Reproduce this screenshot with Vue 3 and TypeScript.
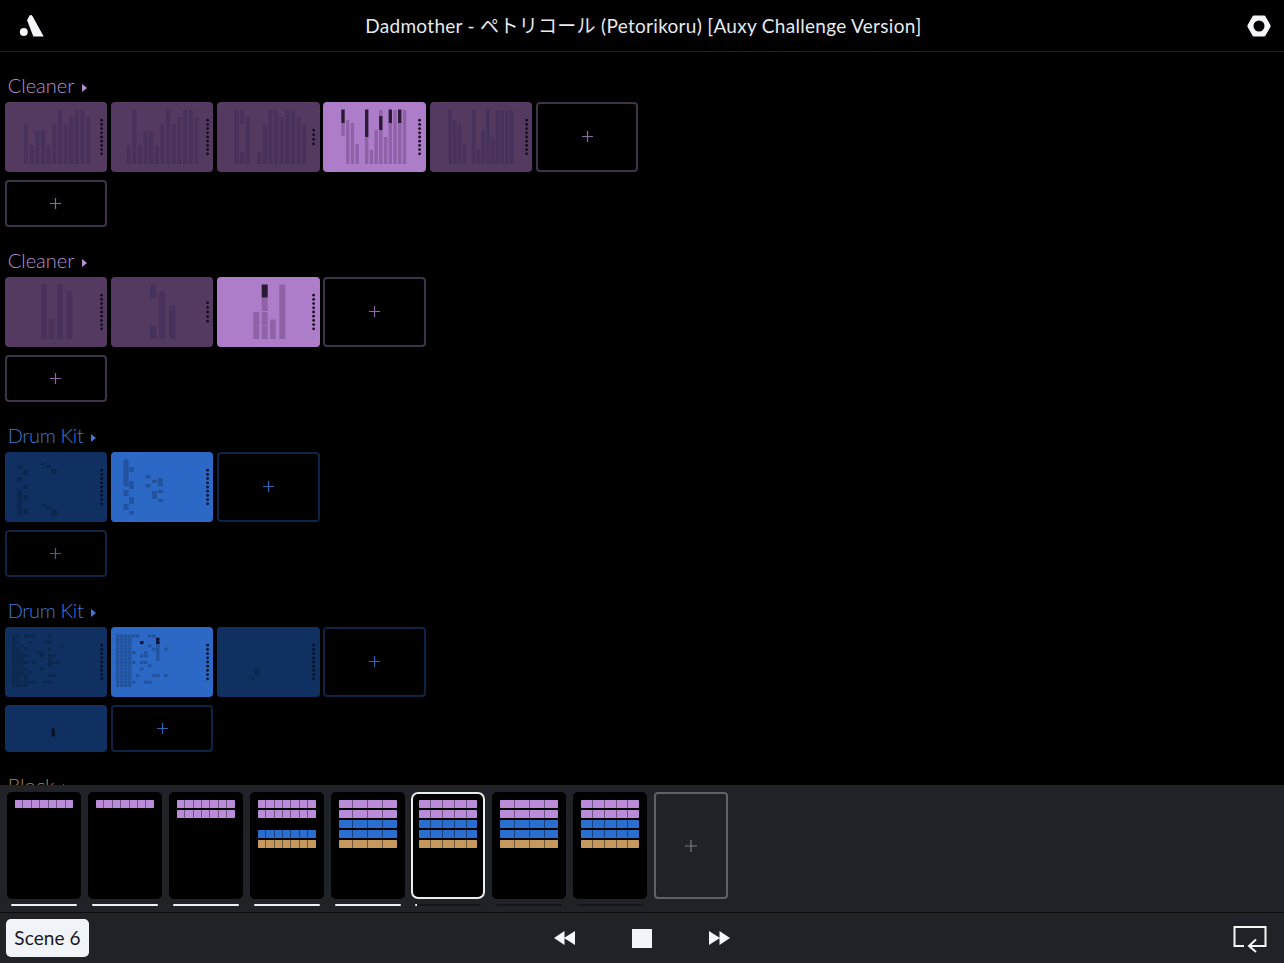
<script setup lang="ts">
type Tone = 'dim' | 'bar' | 'note'
interface Block { x: number; y: number; w: number; h: number; tone: Tone }
interface Clip { active?: boolean; dots: number; blocks: Block[] }
interface Section { name: string; color: 'purple' | 'blue' | 'tan'; clips: Clip[]; extra: Clip[]; addInRow: boolean }

const BOTTOM = 62

function cols(start: number, pitch: number, width: number, tops: (number | null)[]): Block[] {
  const out: Block[] = []
  tops.forEach((t, i) => {
    if (t !== null) out.push({ x: start + i * pitch, y: t, w: width, h: BOTTOM - t, tone: 'bar' })
  })
  return out
}
function rects(list: number[][], tone: Tone = 'bar'): Block[] {
  return list.map(([x, y, w, h]) => ({ x, y, w, h, tone }))
}
function bitmap(x0: number, y0: number, cw: number, ch: number, rows: string[]): Block[] {
  const out: Block[] = []
  rows.forEach((row, r) => {
    for (let c = 0; c < row.length; c++) {
      if (row[c] === '.') continue
      out.push({ x: x0 + c * cw, y: y0 + r * ch, w: cw - 0.5, h: ch - 0.3, tone: row[c] === 'X' ? 'note' : 'bar' })
    }
  })
  return out
}

const c5Tops = [8, 18, 21, 42, null, 8, 48, 28, 8, 35, 8, 8, 8, 8]
const sections: Section[] = [
  {
    name: 'Cleaner', color: 'purple', addInRow: true,
    clips: [
      { dots: 9, blocks: cols(19, 5.65, 4, [22, 43, 29, 29, 43, 22, 8, 22, 15, 8, 8, 15]) },
      { dots: 9, blocks: cols(15.6, 5.65, 4, [43, 8, 43, 29, 29, 43, 22, 8, 22, 15, 8, 8, 15]) },
      {
        dots: 4,
        blocks: [
          ...cols(17.5, 5.65, 4, [8, null, 15, null, 50, 22, 8, 8, 15, 8, 8, 15, 22]),
          ...rects([[23.2, 8, 4, 14], [23.2, 50, 4, 12], [17.5, 8, 4, 54]]),
        ],
      },
      {
        active: true, dots: 9,
        blocks: [
          ...rects([[18.3, 21, 3.4, 13]]),
          ...cols(18.3, 4.73, 3.4, [null, 18, 21, 42, null, 35, 48, 28, 28, 35, 21, 8, 21, 8]),
          ...rects([[56.1, 8, 3.4, 6]]),
          ...rects([[18.3, 7.5, 3.4, 13.5], [42, 7.5, 3.4, 27.5], [56.1, 14, 3.4, 14], [65.6, 7.5, 3.4, 13.5], [75, 7.5, 3.4, 13.5]], 'note'),
        ],
      },
      {
        dots: 9,
        blocks: [...cols(18.3, 4.73, 3.6, c5Tops), ...rects([[18.3, 8, 3.6, 26]])],
      },
    ],
    extra: [],
  },
  {
    name: 'Cleaner', color: 'purple', addInRow: true,
    clips: [
      { dots: 9, blocks: rects([[36.3, 7.5, 5.5, 54.5], [43.8, 42, 5.5, 20], [52.3, 7.5, 5.5, 54.5], [61.7, 14.5, 5.5, 47.5]]) },
      { dots: 5, blocks: rects([[39, 7.5, 6.2, 13], [39, 49, 6.2, 13], [48, 14.5, 6, 47.5], [58, 28.5, 6.5, 33.5]]) },
      {
        active: true, dots: 9,
        blocks: [
          ...rects([[36.3, 35, 6, 27], [44.7, 20.5, 6, 13.5], [44.7, 35, 6, 13.5], [44.7, 49, 6, 13], [53, 42.5, 5.7, 19.5], [62.3, 7.5, 6, 54.5]]),
          ...rects([[44.7, 7.5, 6, 13]], 'note'),
        ],
      },
    ],
    extra: [],
  },
  {
    name: 'Drum Kit', color: 'blue', addInRow: true,
    clips: [
      {
        dots: 9,
        blocks: rects([
          [12, 13, 5, 4], [12, 25, 5, 5], [12, 37, 5, 27], [18, 18, 5, 5], [18, 33, 5, 4], [18, 43, 5, 5], [18, 57, 5, 5],
          [36, 11, 5, 2], [41, 13, 5, 3], [46, 17, 6, 5], [36, 52, 5, 2], [41, 54, 5, 3], [46, 57, 6, 7],
        ]),
      },
      {
        active: true, dots: 9,
        blocks: rects([
          [12.5, 7.5, 5, 27], [12.5, 38, 5, 6], [12.5, 52, 5, 6], [18, 15, 5, 5], [18, 29, 5, 8], [18, 45, 5, 7], [18, 59, 5, 3.5],
          [34.5, 23, 5, 3.5], [34.5, 32, 5, 3.5], [41, 28, 5, 3], [41, 39, 5, 8], [47, 26, 5, 8], [47, 38, 5, 3], [47, 47, 5, 3],
        ]),
      },
    ],
    extra: [],
  },
  {
    name: 'Drum Kit', color: 'blue', addInRow: true,
    clips: [
      {
        dots: 9,
        blocks: bitmap(7, 7.5, 4, 3.3, [
          '##.###...#...', '#............', '##..#...##...', '#.#.........#', '##.#.....#...', '###...##.....',
          '####...#.##..', '###......#...', '####.#...###.', '###......#...', '####...#.....', '###.#........',
          '####.....##..', '##.#.........', '######..##...', '####.........',
        ]),
      },
      {
        active: true, dots: 9,
        blocks: bitmap(5, 7.5, 4, 3.3, [
          '######..##...', '####......X..', '####..X...X..', '####....#.#..', '####.....##.#', '#####..#..#..',
          '####..##..#..', '####......#..', '#####.##.....', '####....#....', '####..#......', '####.........',
          '####.#...##.#', '####.........', '#####..##....', '####.........',
        ]),
      },
      { dots: 9, blocks: rects([[37.5, 41, 5, 8], [29, 49, 5, 1.5], [34, 50, 4, 3]]) },
    ],
    extra: [{ dots: 0, blocks: rects([[46.5, 23.5, 3.5, 8]], 'note') }],
  },
  { name: 'Block', color: 'tan', addInRow: false, clips: [], extra: [] },
]

const clipHeight = (short: boolean): string => (short ? '0 0 102.5 46.5' : '0 0 102.5 70')
function dotsFor(n: number): number[] {
  const pitch = n >= 9 ? 4.2 : 4.6
  const start = 35 - ((n - 1) * pitch) / 2
  return Array.from({ length: n }, (_, i) => start + i * pitch)
}

type Row = 'p' | 'b' | 't' | ''
interface Scene { rows: Row[]; cells: number; line: 'on' | 'start' | 'off'; selected?: boolean }
const full: Row[] = ['p', 'p', 'b', 'b', 't']
const scenes: Scene[] = [
  { rows: ['p'], cells: 7, line: 'on' },
  { rows: ['p'], cells: 7, line: 'on' },
  { rows: ['p', 'p'], cells: 7, line: 'on' },
  { rows: ['p', 'p', '', 'b', 't'], cells: 7, line: 'on' },
  { rows: full, cells: 4, line: 'on' },
  { rows: full, cells: 5, line: 'start', selected: true },
  { rows: full, cells: 4, line: 'off' },
  { rows: full, cells: 5, line: 'off' },
]
</script>

<template>
  <div class="app">
    <header class="top">
      <svg class="logo" width="25" height="24" viewBox="0 0 26 24" aria-label="Auxy">
        <circle cx="5" cy="18.2" r="4.1" fill="#f4f7fa" />
        <path d="M11 1.2 Q12.6 -0.4 14 1.5 L25.4 22.4 Q25.6 23 24.8 23 L15.6 23 Q15 23 14.7 22.4 L8.4 6 Z" fill="#f4f7fa" />
      </svg>
      <h1 class="title">Dadmother - ペトリコール (Petorikoru) [Auxy Challenge Version]</h1>
      <svg class="nut" width="24" height="22" viewBox="0 0 24 22" aria-label="Settings">
        <path fill-rule="evenodd" fill="#f4f7fa" d="M6.8 0.6 H17.2 Q18 0.6 18.4 1.3 L23.4 10 Q23.9 11 23.4 12 L18.4 20.7 Q18 21.4 17.2 21.4 H6.8 Q6 21.4 5.6 20.7 L0.6 12 Q0.1 11 0.6 10 L5.6 1.3 Q6 0.6 6.8 0.6 Z M12 5.5 A5.5 5.5 0 1 0 12 16.5 A5.5 5.5 0 1 0 12 5.5 Z" />
      </svg>
    </header>

    <main class="tracks">
      <section v-for="(s, si) in sections" :key="si" class="track" :class="s.color">
        <div class="label">
          <span>{{ s.name }}</span>
          <i class="caret"></i>
        </div>
        <div class="row">
          <div v-for="(c, ci) in s.clips" :key="ci" class="clip" :class="{ active: c.active }">
            <svg :viewBox="clipHeight(false)" width="102.5" height="70">
              <rect v-for="(b, bi) in c.blocks" :key="bi" :x="b.x" :y="b.y" :width="b.w" :height="b.h" :class="b.tone" />
              <circle v-for="d in dotsFor(c.dots)" :key="d" cx="96.6" :cy="d" r="1.4" class="dot" />
            </svg>
          </div>
          <button v-if="s.addInRow" class="add">
            <svg width="11" height="11" viewBox="0 0 11 11"><path d="M5.5 0V11M0 5.5H11" /></svg>
          </button>
        </div>
        <div class="row short">
          <div v-for="(c, ci) in s.extra" :key="ci" class="clip short">
            <svg :viewBox="clipHeight(true)" width="102.5" height="46.5">
              <rect v-for="(b, bi) in c.blocks" :key="bi" :x="b.x" :y="b.y" :width="b.w" :height="b.h" :class="b.tone" />
            </svg>
          </div>
          <button v-if="s.addInRow" class="add short">
            <svg width="11" height="11" viewBox="0 0 11 11"><path d="M5.5 0V11M0 5.5H11" /></svg>
          </button>
        </div>
      </section>
    </main>

    <div class="scenes">
      <div v-for="(sc, i) in scenes" :key="i" class="scene">
        <div class="thumb" :class="{ selected: sc.selected }">
          <div v-for="(r, ri) in sc.rows" :key="ri" class="strip" :class="r">
            <template v-if="r">
              <b v-for="n in sc.cells" :key="n"></b>
            </template>
          </div>
        </div>
        <div class="progress" :class="sc.line"></div>
      </div>
      <button class="scene-add">
        <svg width="12" height="12" viewBox="0 0 12 12"><path d="M6 0V12M0 6H12" /></svg>
      </button>
    </div>

    <footer class="controls">
      <div class="controls-left"><button class="scene-name">Scene 6</button></div>
      <div class="transport">
        <svg width="21" height="14" viewBox="0 0 21 14" aria-label="Rewind"><path d="M0 7 L10.5 0 V14 Z M10 7 L21 0 V14 Z" fill="#f4f7fa" /></svg>
        <span class="stop"></span>
        <svg width="21" height="14" viewBox="0 0 21 14" aria-label="Forward"><path d="M21 7 L10.5 0 V14 Z M11 7 L0 0 V14 Z" fill="#f4f7fa" /></svg>
      </div>
      <div class="controls-right">
        <svg width="34" height="27" viewBox="0 0 34 27" aria-label="Loop" fill="none" stroke="#f4f7fa" stroke-width="2">
          <path d="M11 20 H1.5 V1 H32.5 V20 H16" />
          <path d="M23 13.5 L16 20 L23 26" stroke-linejoin="miter" />
        </svg>
      </div>
    </footer>
  </div>
</template>

<style>
html, body { margin: 0; background: #000; }
</style>

<style scoped>
.app {
  width: 1284px;
  height: 963px;
  display: flex;
  flex-direction: column;
  background: #000;
  overflow: hidden;
  font-family: Lato, "Noto Sans CJK JP", sans-serif;
}
.top {
  height: 51px;
  flex: none;
  display: flex;
  align-items: center;
  justify-content: space-between;
  padding: 0 13px 0 19px;
  border-bottom: 1px solid #222327;
}
.logo { margin-top: 1px; }
.title {
  margin: -2px 0 0 -4px;
  font-size: 19px;
  font-weight: 400;
  letter-spacing: 0.3px;
  color: #e6e9ed;
  white-space: nowrap;
}
.tracks {
  flex: 1;
  min-height: 0;
  overflow: hidden;
  padding-left: 4.7px;
}
.track { padding-top: 24px; height: 151px; }
.label {
  height: 22px;
  margin-bottom: 4px;
  padding-left: 3px;
  display: flex;
  align-items: center;
  gap: 8px;
  font-size: 20px;
  font-weight: 300;
  line-height: 22px;
}
.label span { position: relative; top: -2px; }
.blue .label span { letter-spacing: -0.35px; }
.caret {
  width: 0;
  height: 0;
  margin-top: 1px;
  border-left: 5px solid currentColor;
  border-top: 4px solid transparent;
  border-bottom: 4px solid transparent;
}
.row { display: flex; gap: 3.75px; height: 69.6px; margin-bottom: 8.4px; }
.row.short { height: 47px; margin-bottom: 0; }
.clip { width: 102.5px; height: 69.6px; border-radius: 4px; overflow: hidden; flex: none; }
.clip.short { height: 47px; }
.clip svg { display: block; }
.add {
  width: 102.5px;
  height: 69.6px;
  box-sizing: border-box;
  padding: 0;
  flex: none;
  display: flex;
  align-items: center;
  justify-content: center;
  background: transparent;
  border-radius: 4px;
  border: 2px solid;
}
.add.short { height: 47px; }
.add path { fill: none; stroke-width: 1.2; }

.purple .label { color: #b790d2; }
.purple .clip { background: #543a60; }
.purple .clip.active { background: #ae7dc9; }
.purple rect.bar { fill: #48315a; }
.purple .active rect.bar { fill: #8f62a8; }
.purple .note { fill: #2b1a36; }
.purple .dot { fill: #170d1e; }
.purple .add { border-color: #3f3249; }
.purple .add path { stroke: #8a6a9f; }

.blue .label { color: #3f78d2; }
.blue .clip { background: #0f3060; }
.blue .clip.active { background: #2c68c6; }
.blue rect.bar { fill: #0c2850; }
.blue .active rect.bar { fill: #21539f; }
.blue .note { fill: #05142c; }
.blue .dot { fill: #04122a; }
.blue .add { border-color: #0e2444; }
.blue .add path { stroke: #2e62b4; }

.tan .label { color: #a5875a; }

.scenes {
  height: 128px;
  flex: none;
  box-sizing: border-box;
  display: flex;
  gap: 6.9px;
  padding: 7px 0 0 7px;
  background: #202227;
  border-bottom: 1px solid #0c0d0f;
}
.scene { width: 74px; }
.thumb {
  width: 74px;
  height: 107px;
  box-sizing: border-box;
  padding: 8px 8px 0;
  display: flex;
  flex-direction: column;
  gap: 2px;
  background: #000;
  border-radius: 5px;
}
.thumb.selected { box-shadow: inset 0 0 0 2px #e9edf1; border-radius: 7px; }
.strip { height: 8px; display: flex; gap: 1px; flex: none; border-radius: 1px; overflow: hidden; }
.strip b { flex: 1; }
.strip.p { background: #6f5384; }
.strip.b { background: #174080; }
.strip.t { background: #6f5836; }
.strip.p b { background: #b98bd8; }
.strip.b b { background: #2a6fd0; }
.strip.t b { background: #c4985e; }
.progress {
  height: 2px;
  margin: 5px 4px 0;
  background: #15161a;
  border-radius: 1px;
}
.progress.on { background: #eef1f4; }
.progress.start { background: linear-gradient(90deg, #eef1f4 0 2px, #15161a 2px); }
.scene-add {
  width: 74px;
  height: 107px;
  box-sizing: border-box;
  padding: 0;
  display: flex;
  align-items: center;
  justify-content: center;
  background: transparent;
  border: 2px solid #5f6167;
  border-radius: 4px;
}
.scene-add path { fill: none; stroke: #77797f; stroke-width: 1.2; }

.controls {
  height: 50px;
  flex: none;
  box-sizing: border-box;
  display: grid;
  grid-template-columns: 1fr auto 1fr;
  align-items: center;
  background: #202227;
  padding: 0 16px;
}
.controls-left { margin-left: -10px; }
.scene-name {
  width: 83px;
  height: 38px;
  padding: 0 0 2px;
  display: block;
  border: 0;
  border-radius: 5px;
  background: #f0f4f8;
  color: #17181b;
  font-family: inherit;
  font-size: 19px;
  font-weight: 400;
  letter-spacing: 0.1px;
}
.transport { display: flex; align-items: center; gap: 57px; }
.stop { width: 20px; height: 19px; background: #f0f4f8; display: block; }
.controls-right { display: flex; justify-content: flex-end; }
.controls-right svg { margin-top: 3px; margin-right: 1px; }
</style>
